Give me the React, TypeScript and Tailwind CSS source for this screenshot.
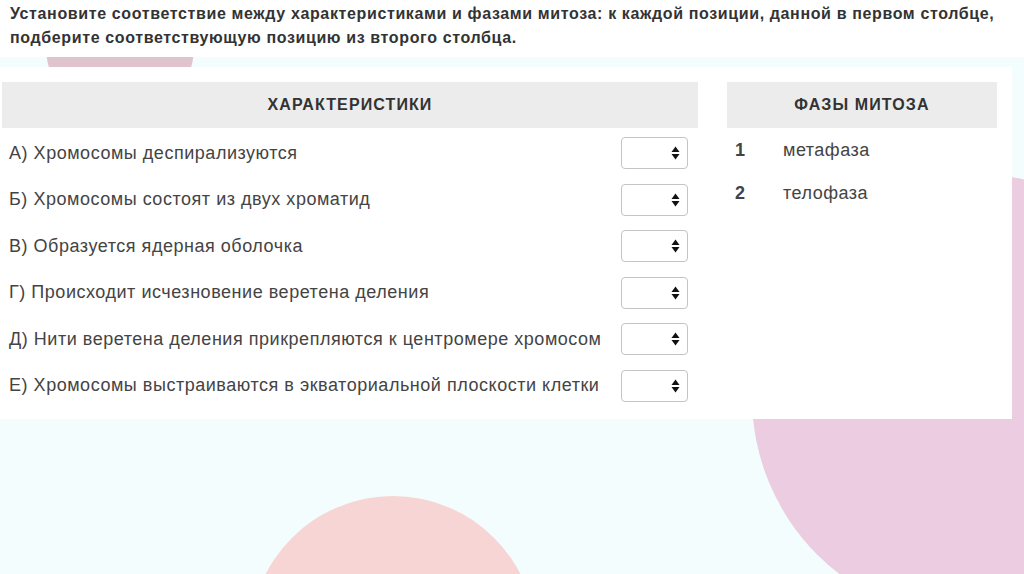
import React from "react";

const rows = [
  "А) Хромосомы деспирализуются",
  "Б) Хромосомы состоят из двух хроматид",
  "В) Образуется ядерная оболочка",
  "Г) Происходит исчезновение веретена деления",
  "Д) Нити веретена деления прикрепляются к центромере хромосом",
  "Е) Хромосомы выстраиваются в экваториальной плоскости клетки",
];

function SelectBox() {
  return (
    <div className="w-[67px] h-[32px] border border-[#c4c4c4] rounded-[4px] bg-white flex items-center justify-end pr-[7px] shrink-0">
      <svg width="9" height="14" viewBox="0 0 9 14">
        <path d="M4.5 0.5 L8.5 6 L0.5 6 Z" fill="#111" />
        <path d="M0.5 8 L8.5 8 L4.5 13.5 Z" fill="#111" />
      </svg>
    </div>
  );
}

export default function App() {
  return (
    <div
      className="relative w-[1024px] h-[574px] overflow-hidden bg-[#f3fdfd]"
      style={{ fontFamily: '"Liberation Sans", Arial, sans-serif' }}
    >
      {/* decorative circles */}
      <div className="absolute left-[46px] top-[-27px] w-[148px] h-[148px] rounded-full bg-[#e0c4cd]" />
      <div className="absolute left-[752px] top-[174px] w-[446px] h-[446px] rounded-full bg-[#ebcce0]" />
      <div className="absolute left-[250px] top-[496px] w-[286px] h-[286px] rounded-full bg-[#f7d5d5]" />

      <div className="relative flex flex-col">
        <div className="h-[57px] bg-white px-[10px] pt-[2px] text-[16px] font-bold leading-[24px] tracking-[0.63px] text-[#333] whitespace-nowrap">
          Установите соответствие между характеристиками и фазами митоза: к каждой позиции, данной в первом столбце,
          <br />
          подберите соответствующую позицию из второго столбца.
        </div>
        <div className="h-[10px]" />
        <div className="w-[1012px] h-[352px] bg-white pt-[15px] flex">
          <div className="ml-[2px] w-[696px] flex flex-col">
            <div className="h-[46px] bg-[#ececec] flex items-center justify-center text-[16px] font-bold tracking-[1.1px] text-[#333]">
              ХАРАКТЕРИСТИКИ
            </div>
            <div className="flex flex-col pt-[9px] gap-[14.5px]">
              {rows.map((r) => (
                <div key={r} className="flex items-center justify-between pl-[7px] pr-[10px] h-[32px]">
                  <span className="text-[18px] text-[#444] tracking-[0.53px] whitespace-nowrap">{r}</span>
                  <SelectBox />
                </div>
              ))}
            </div>
          </div>
          <div className="ml-[29px] w-[270px] flex flex-col">
            <div className="h-[46px] bg-[#ececec] flex items-center justify-center text-[16px] font-bold tracking-[1.1px] text-[#333]">
              ФАЗЫ МИТОЗА
            </div>
            <div className="flex flex-col pt-[12px] gap-[22px] text-[18px] leading-[21px] text-[#444] tracking-[0.5px]">
              <div className="flex items-center pl-[8px]">
                <span className="w-[48px] font-bold">1</span>
                <span>метафаза</span>
              </div>
              <div className="flex items-center pl-[8px]">
                <span className="w-[48px] font-bold">2</span>
                <span>телофаза</span>
              </div>
            </div>
          </div>
        </div>
      </div>
    </div>
  );
}
